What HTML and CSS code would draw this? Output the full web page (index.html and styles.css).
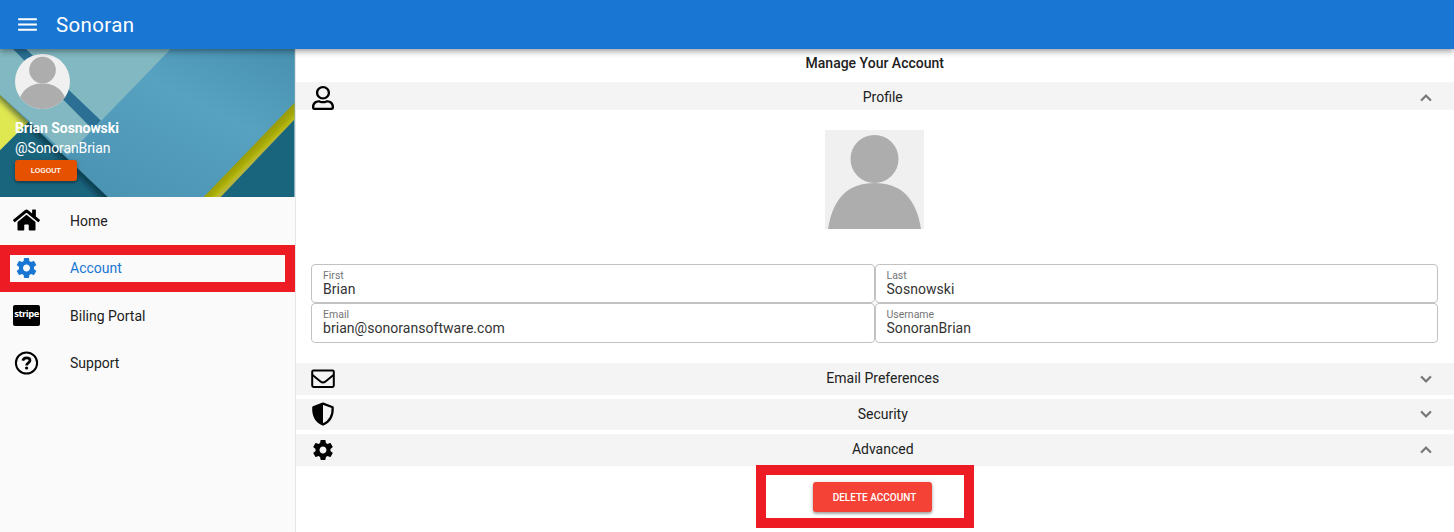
FILE: index.html
```html
<!DOCTYPE html>
<html lang="en">
<head>
<meta charset="utf-8">
<title>Sonoran</title>
<link rel="stylesheet" href="styles.css">
</head>
<body>
<svg class="defs" width="0" height="0">
  <symbol id="gear" viewBox="0 0 24 24"><path d="M19.43 12.98c.04-.32.07-.64.07-.98s-.03-.66-.07-.98l2.11-1.65c.19-.15.24-.42.12-.64l-2-3.46c-.12-.22-.39-.3-.61-.22l-2.49 1c-.52-.4-1.08-.73-1.69-.98l-.38-2.65C14.46 2.18 14.25 2 14 2h-4c-.25 0-.46.18-.49.42l-.38 2.65c-.61.25-1.17.59-1.69.98l-2.49-1c-.23-.09-.49 0-.61.22l-2 3.46c-.13.22-.07.49.12.64l2.11 1.65c-.04.32-.07.65-.07.98s.03.66.07.98l-2.11 1.65c-.19.15-.24.42-.12.64l2 3.46c.12.22.39.3.61.22l2.49-1c.52.4 1.08.73 1.69.98l.38 2.65c.03.24.24.42.49.42h4c.25 0 .46-.18.49-.42l.38-2.65c.61-.25 1.17-.59 1.69-.98l2.49 1c.23.09.49 0 .61-.22l2-3.46c.12-.22.07-.49-.12-.64l-2.11-1.65zM12 15.5c-1.93 0-3.5-1.57-3.5-3.5s1.57-3.5 3.5-3.5 3.5 1.57 3.5 3.5-1.57 3.5-3.5 3.5z"/></symbol>
  <symbol id="person" viewBox="0 0 99 99"><path fill="#f0f0f0" d="M0 0h99v99H0z"/><g fill="#adadad"><circle cx="49.5" cy="29" r="24"/><path d="M3 99C8 67 24 53 49.500 53S91 67 96 99z"/></g></symbol>
  <symbol id="chevron" viewBox="0 0 24 24"><path d="M7.410 8.590 12 13.170l4.590-4.580L18 10l-6 6-6-6z"/></symbol>
</svg>

<header class="topbar">
  <svg class="menu-icon" viewBox="0 0 24 24"><path d="M3 18h18v-2H3v2zm0-5h18v-2H3v2zm0-7v2h18V6H3z"/></svg>
  <h1 class="brand">Sonoran</h1>
</header>

<div class="layout">
  <aside class="sidebar">
    <section class="user-card">
      <svg class="cover" viewBox="0 48 295 149" preserveAspectRatio="none">
        <defs>
          <linearGradient id="sheet" x1="0" y1="1" x2="1" y2="0"><stop offset="0" stop-color="#468eac"/><stop offset=".65" stop-color="#57a1c1"/><stop offset="1" stop-color="#4790b0"/></linearGradient>
          <linearGradient id="olive" gradientUnits="userSpaceOnUse" x1="245" y1="150" x2="257" y2="162"><stop offset="0" stop-color="#929608"/><stop offset=".5" stop-color="#a6a909"/><stop offset=".72" stop-color="#b9ba12"/><stop offset=".82" stop-color="#b5b24c"/><stop offset="1" stop-color="#bbbd16"/></linearGradient>
          <filter id="soft" x="-20%" y="-20%" width="140%" height="140%"><feGaussianBlur stdDeviation="3"/></filter>
        </defs>
        <path fill="#1a657e" d="M0 48h295v149H0z"/>
        <path fill="#dfe851" d="M0 92 29 121 0 150z"/>
        <path stroke="#001a20" stroke-opacity=".8" stroke-width="5" filter="url(#soft)" d="M-5 89 112 203"/>
        <path fill="url(#sheet)" d="M0 48H295V104L205 197H108L0 94z"/>
        <path fill="#82b8c1" d="M0 48H171L68 155 0 94z"/>
        <path fill="#2b7094" d="M13 48H26L101 120 93 129z"/>
        <path fill="url(#olive)" d="M295 102V119L221 197H204z"/>
      </svg>
      <div class="user-info">
        <svg class="avatar"><use href="#person"/></svg>
        <div class="user-name">Brian Sosnowski</div>
        <div class="user-handle">@SonoranBrian</div>
        <button class="logout">LOGOUT</button>
      </div>
    </section>
    <nav class="nav">
      <a class="nav-item"><svg class="nav-icon home" viewBox="0 0 576 512"><path d="M280.37 148.26L96 300.11V464a16 16 0 0 0 16 16l112.06-.29a16 16 0 0 0 15.92-16V368a16 16 0 0 1 16-16h64a16 16 0 0 1 16 16v95.64a16 16 0 0 0 16 16.05L464 480a16 16 0 0 0 16-16V300L295.67 148.26a12.19 12.19 0 0 0-15.3 0zM571.6 251.47L488 182.56V44.05a12 12 0 0 0-12-12h-56a12 12 0 0 0-12 12v72.61L318.47 43a48 48 0 0 0-61 0L4.34 251.47a12 12 0 0 0-1.6 16.9l25.5 31A12 12 0 0 0 45.15 301l235.22-193.74a12.19 12.19 0 0 1 15.3 0L530.9 301a12 12 0 0 0 16.9-1.6l25.5-31a12 12 0 0 0-1.7-16.93z"/></svg><span>Home</span></a>
      <a class="nav-item active"><svg class="nav-icon"><use href="#gear"/></svg><span>Account</span></a>
      <a class="nav-item"><b class="nav-icon stripe">stripe</b><span>Biling Portal</span></a>
      <a class="nav-item"><svg class="nav-icon" viewBox="0 0 24 24" fill="none" stroke="#000"><circle cx="12" cy="12" r="10.600" stroke-width="2"/><path stroke-width="2.700" d="M8.300 9.700C8.900 7.500 10.300 6.800 12 6.800c2.200 0 3.500 1.200 3.500 2.800 0 2.300-3.400 2.200-3.400 4.800"/><circle cx="12.100" cy="17" r="1.600" fill="#000" stroke="none"/></svg><span>Support</span></a>
    </nav>
  </aside>

  <main class="content">
    <h2 class="title">Manage Your Account</h2>
    <div class="bar bar-profile">
      <svg class="bar-icon user" viewBox="0 0 448 512" preserveAspectRatio="none"><path d="M313.6 304c-28.7 0-42.5 16-89.6 16-47.1 0-60.8-16-89.6-16C60.2 304 0 364.2 0 438.4V464c0 26.5 21.5 48 48 48h352c26.5 0 48-21.5 48-48v-25.600c0-74.2-60.2-134.400-134.400-134.400zM400 464H48v-25.600c0-47.600 38.800-86.400 86.400-86.400 14.600 0 38.300 16 89.600 16 51.700 0 74.900-16 89.600-16 47.600 0 86.400 38.800 86.400 86.400V464zM224 288c79.500 0 144-64.500 144-144S303.500 0 224 0 80 64.500 80 144s64.500 144 144 144zm0-240c52.900 0 96 43.100 96 96s-43.100 96-96 96-96-43.100-96-96 43.100-96 96-96z"/></svg>
      <span>Profile</span>
      <svg class="chevron up"><use href="#chevron"/></svg>
    </div>
    <section class="profile">
      <svg class="photo"><use href="#person"/></svg>
      <div class="fields">
        <label class="field"><small>First</small><span>Brian</span></label>
        <label class="field"><small>Last</small><span>Sosnowski</span></label>
        <label class="field"><small>Email</small><span>brian@sonoransoftware.com</span></label>
        <label class="field"><small>Username</small><span>SonoranBrian</span></label>
      </div>
    </section>
    <div class="bars">
      <div class="bar">
        <svg class="bar-icon" viewBox="0 0 24 24" fill="none" stroke="#000" stroke-width="2"><rect x="1.200" y="3.500" width="21.600" height="16.400" rx="1.300"/><path d="M1.500 8 9.500 14.500q2.500 2 5 0l8-6.500"/></svg>
        <span>Email Preferences</span>
        <svg class="chevron"><use href="#chevron"/></svg>
      </div>
      <div class="bar">
        <svg class="bar-icon" viewBox="0 0 24 24"><path fill="none" stroke="#000" stroke-width="2.200" stroke-linejoin="round" d="M12 1.600 21.700 5.300C22 13.500 18.300 20 12 22.600 5.700 20 2 13.500 2.300 5.300z"/><path d="M12 1.600V22.600C5.700 20 2 13.500 2.300 5.300z"/></svg>
        <span>Security</span>
        <svg class="chevron"><use href="#chevron"/></svg>
      </div>
      <div class="bar">
        <svg class="bar-icon"><use href="#gear"/></svg>
        <span>Advanced</span>
        <svg class="chevron up"><use href="#chevron"/></svg>
      </div>
    </div>
    <div class="actions"><button class="delete">DELETE ACCOUNT</button></div>
  </main>
</div>
<div class="mark mark-account"></div>
<div class="mark mark-delete"></div>
</body>
</html>
```
FILE: styles.css
```css
* { box-sizing: border-box; }
body {
  margin: 0;
  height: 532px;
  overflow: hidden;
  position: relative;
  background: #fff;
  color: #212121;
  font: 14px/20px Roboto, sans-serif;
}
.defs { position: absolute; }
.topbar {
  position: relative;
  z-index: 2;
  height: 48.5px;
  display: flex;
  align-items: center;
  padding-left: 15px;
  gap: 16px;
  background: #1976d2;
  color: #fff;
  box-shadow: 0 2px 4px -1px rgba(0,0,0,.2), 0 4px 5px rgba(0,0,0,.14), 0 1px 10px rgba(0,0,0,.12);
}
.menu-icon { width: 25px; height: 25px; fill: #fff; }
.brand { margin: 0; padding-top: 1px; font-size: 20.500px; font-weight: 400; line-height: 24px; letter-spacing: .35px; }
.layout { display: flex; height: 483.5px; }
.sidebar {
  width: 295.500px;
  flex: none;
  background: #fafafa;
  border-right: 1px solid #e6e6e6;
}
.user-card { position: relative; height: 148px; overflow: hidden; }
.cover { position: absolute; inset: 0; width: 100%; height: 100%; }
.user-info { position: relative; padding: 5.500px 15px; color: #fff; }
.avatar { display: block; width: 55px; height: 55px; border-radius: 50%; }
.user-name { margin-top: 9px; font-weight: 700; line-height: 20px; letter-spacing: -.06px; }
.user-handle { line-height: 21px; letter-spacing: -.1px; }
button {
  display: block;
  border: 0;
  padding: 0;
  border-radius: 3px;
  color: #fff;
  font-family: Roboto, sans-serif;
  box-shadow: 0 1px 4px rgba(0,0,0,.25), 0 2px 2px rgba(0,0,0,.2);
}
.logout { width: 62px; height: 21px; margin-top: 1px; background: #e65100; font-size: 8px; font-weight: 500; letter-spacing: -.05px; }
.nav-item { display: flex; align-items: center; height: 47.5px; padding-left: 13px; }
.nav-item span { margin-left: 30px; padding-top: 1px; }
.nav-icon { width: 27px; height: 24px; flex: none; }
.active { color: #1976d2; fill: #1976d2; }
.active span { padding-top: 0; }
.stripe {
  height: 21px;
  border-radius: 2px;
  background: #000;
  color: #fff;
  font: 700 9.500px/18px "Open Sans", sans-serif;
  letter-spacing: -.5px;
  text-align: center;
}
.content { flex: 1; min-width: 0; }
.title { margin: 0; height: 33.500px; font-size: 14px; font-weight: 500; line-height: 28px; text-align: center; }
.bar {
  display: grid;
  grid-template-columns: 52px 1fr 40px;
  align-items: center;
  height: 31.500px;
  padding: 0 12px 0 15.500px;
  background: #f4f4f4;
  text-align: center;
}
.bar span { margin: 0 0 1px .5px; }
.bar-profile { height: 28px; padding-top: 3px; }
.bar-profile span { margin-bottom: 1.500px; }
.bar-icon { width: 24px; height: 24px; }
.user { width: 22px; margin-left: 1px; }
.chevron { width: 22px; height: 22px; justify-self: end; margin-right: 5px; fill: #757575; stroke: #757575; stroke-width: .3; }
.up { transform: rotate(180deg); }
.profile { height: 253px; padding: 19.500px 16px 0 15.500px; }
.photo { display: block; width: 99px; height: 99px; margin: 0 auto; }
.fields { display: grid; grid-template-columns: 1fr 1fr; grid-auto-rows: 39.500px; margin-top: 35px; }
.field {
  display: flex;
  flex-direction: column;
  padding: 4px 11px 0;
  border: 1px solid #c2c2c2;
  border-radius: 4px;
}
.field small { font-size: 10.500px; line-height: 13px; color: #757575; }
.field span { line-height: 15px; color: #333; letter-spacing: .04px; }
.bars { display: grid; gap: 4px; }
.actions { padding: 16px 4.500px 0 0; }
.delete { width: 119px; height: 30px; margin: 0 auto; padding: 1px 0 0 4px; background: #f44336; font-size: 10px; font-weight: 500; line-height: 29px; }
.mark { position: absolute; z-index: 3; border: 10px solid #ed1c24; }
.mark-account { left: 0; top: 245px; width: 295px; height: 47px; }
.mark-delete { left: 756px; top: 465px; width: 218px; height: 63px; }
```
